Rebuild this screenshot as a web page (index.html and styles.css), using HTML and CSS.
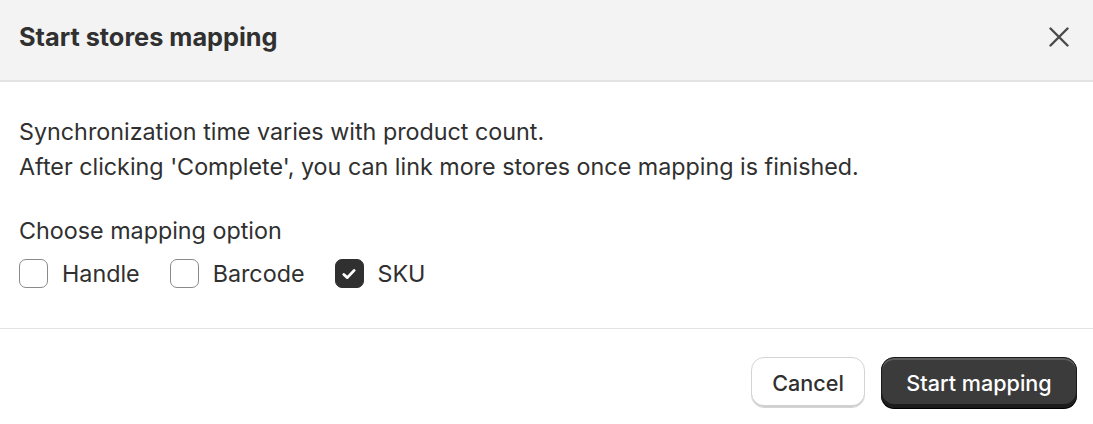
FILE: index.html
```html
<!DOCTYPE html>
<html lang="en">
<head>
<meta charset="utf-8">
<title>Start stores mapping</title>
<link rel="stylesheet" href="styles.css">
</head>
<body>
<div class="modal">
  <header class="modal-header">
    <h2 class="modal-title">Start stores mapping</h2>
    <button class="close-btn" type="button" aria-label="Close">
      <svg width="20" height="20" viewBox="0 0 20 20" aria-hidden="true">
        <path d="M1.5 1.5 L18.5 18.5 M18.5 1.5 L1.5 18.5" stroke="#4a4a4a" stroke-width="2.4" stroke-linecap="round" fill="none"/>
      </svg>
    </button>
  </header>
  <section class="modal-body">
    <p class="para">Synchronization time varies with product count.<br>After clicking 'Complete', you can link more stores once mapping is finished.</p>
    <p class="label">Choose mapping option</p>
    <div class="options">
      <label class="option"><span class="box"></span><span>Handle</span></label>
      <label class="option"><span class="box"></span><span>Barcode</span></label>
      <label class="option"><span class="box checked">
        <svg width="18" height="18" viewBox="0 0 16 16" aria-hidden="true"><path d="M3.4 8.4 L6.5 11.2 L12.6 4.8" stroke="#fff" stroke-width="2.5" stroke-linecap="round" stroke-linejoin="round" fill="none"/></svg>
      </span><span>SKU</span></label>
    </div>
  </section>
  <footer class="modal-footer">
    <button class="btn btn-secondary" type="button">Cancel</button>
    <button class="btn btn-primary" type="button">Start mapping</button>
  </footer>
</div>
</body>
</html>
```
FILE: styles.css
```css
* { box-sizing: border-box; }
html, body { margin: 0; padding: 0; background: #ffffff; }
body {
  font-family: Inter, "Noto Sans", "Liberation Sans", sans-serif;
  color: #303030;
  width: 1093px;
  height: 424px;
  overflow: hidden;
}
.modal { display: flex; flex-direction: column; }
.modal-header {
  display: flex;
  align-items: flex-start;
  justify-content: space-between;
  background: #f3f3f3;
  border-bottom: 2px solid #e3e3e3;
  height: 82px;
  padding: 19px 24px 0 19px;
}
.modal-title {
  margin: 0;
  font-size: 25.3px;
  line-height: 35px;
  font-weight: 650;
  color: #303030;
}
.close-btn {
  border: 0;
  background: transparent;
  padding: 0;
  margin-top: 8px;
  width: 20px;
  height: 20px;
  display: flex;
}
.modal-body {
  padding: 32px 19px 0 19px;
  height: 247px;
  border-bottom: 1px solid #e3e3e3;
}
.para {
  margin: 0;
  font-size: 23.3px;
  line-height: 35px;
  color: #303030;
}
.label {
  margin: 29px 0 0 0;
  font-size: 23.3px;
  line-height: 35px;
}
.options {
  display: flex;
  gap: 30px;
  margin-top: 8px;
}
.option {
  display: flex;
  align-items: center;
  gap: 14px;
  font-size: 23.3px;
  line-height: 35px;
}
.box {
  width: 29px;
  height: 29px;
  border: 1.5px solid #8a8a8a;
  border-radius: 7px;
  background: #fff;
  display: flex;
  align-items: center;
  justify-content: center;
}
.box.checked {
  background: #303030;
  border-color: #303030;
}
.modal-footer {
  display: flex;
  justify-content: flex-end;
  gap: 16px;
  padding: 28px 16px 0 0;
}
.btn {
  font-family: inherit;
  font-size: 21.6px;
  font-weight: 550;
  height: 51px;
  border-radius: 13px;
  padding: 0;
  cursor: pointer;
}
.btn-secondary {
  width: 114px;
  background: #ffffff;
  color: #303030;
  border: 1.5px solid #d4d4d4;
  box-shadow: inset 0 -2px 0 #d0d0d0;
}
.btn-primary {
  width: 196px;
  background: #3b3b3b;
  color: #ffffff;
  border: 1.5px solid #1a1a1a;
  box-shadow: inset 0 2px 0 rgba(255,255,255,0.18), inset 0 -3px 0 #1c1c1c, 0 1px 0 #000;
}
```
